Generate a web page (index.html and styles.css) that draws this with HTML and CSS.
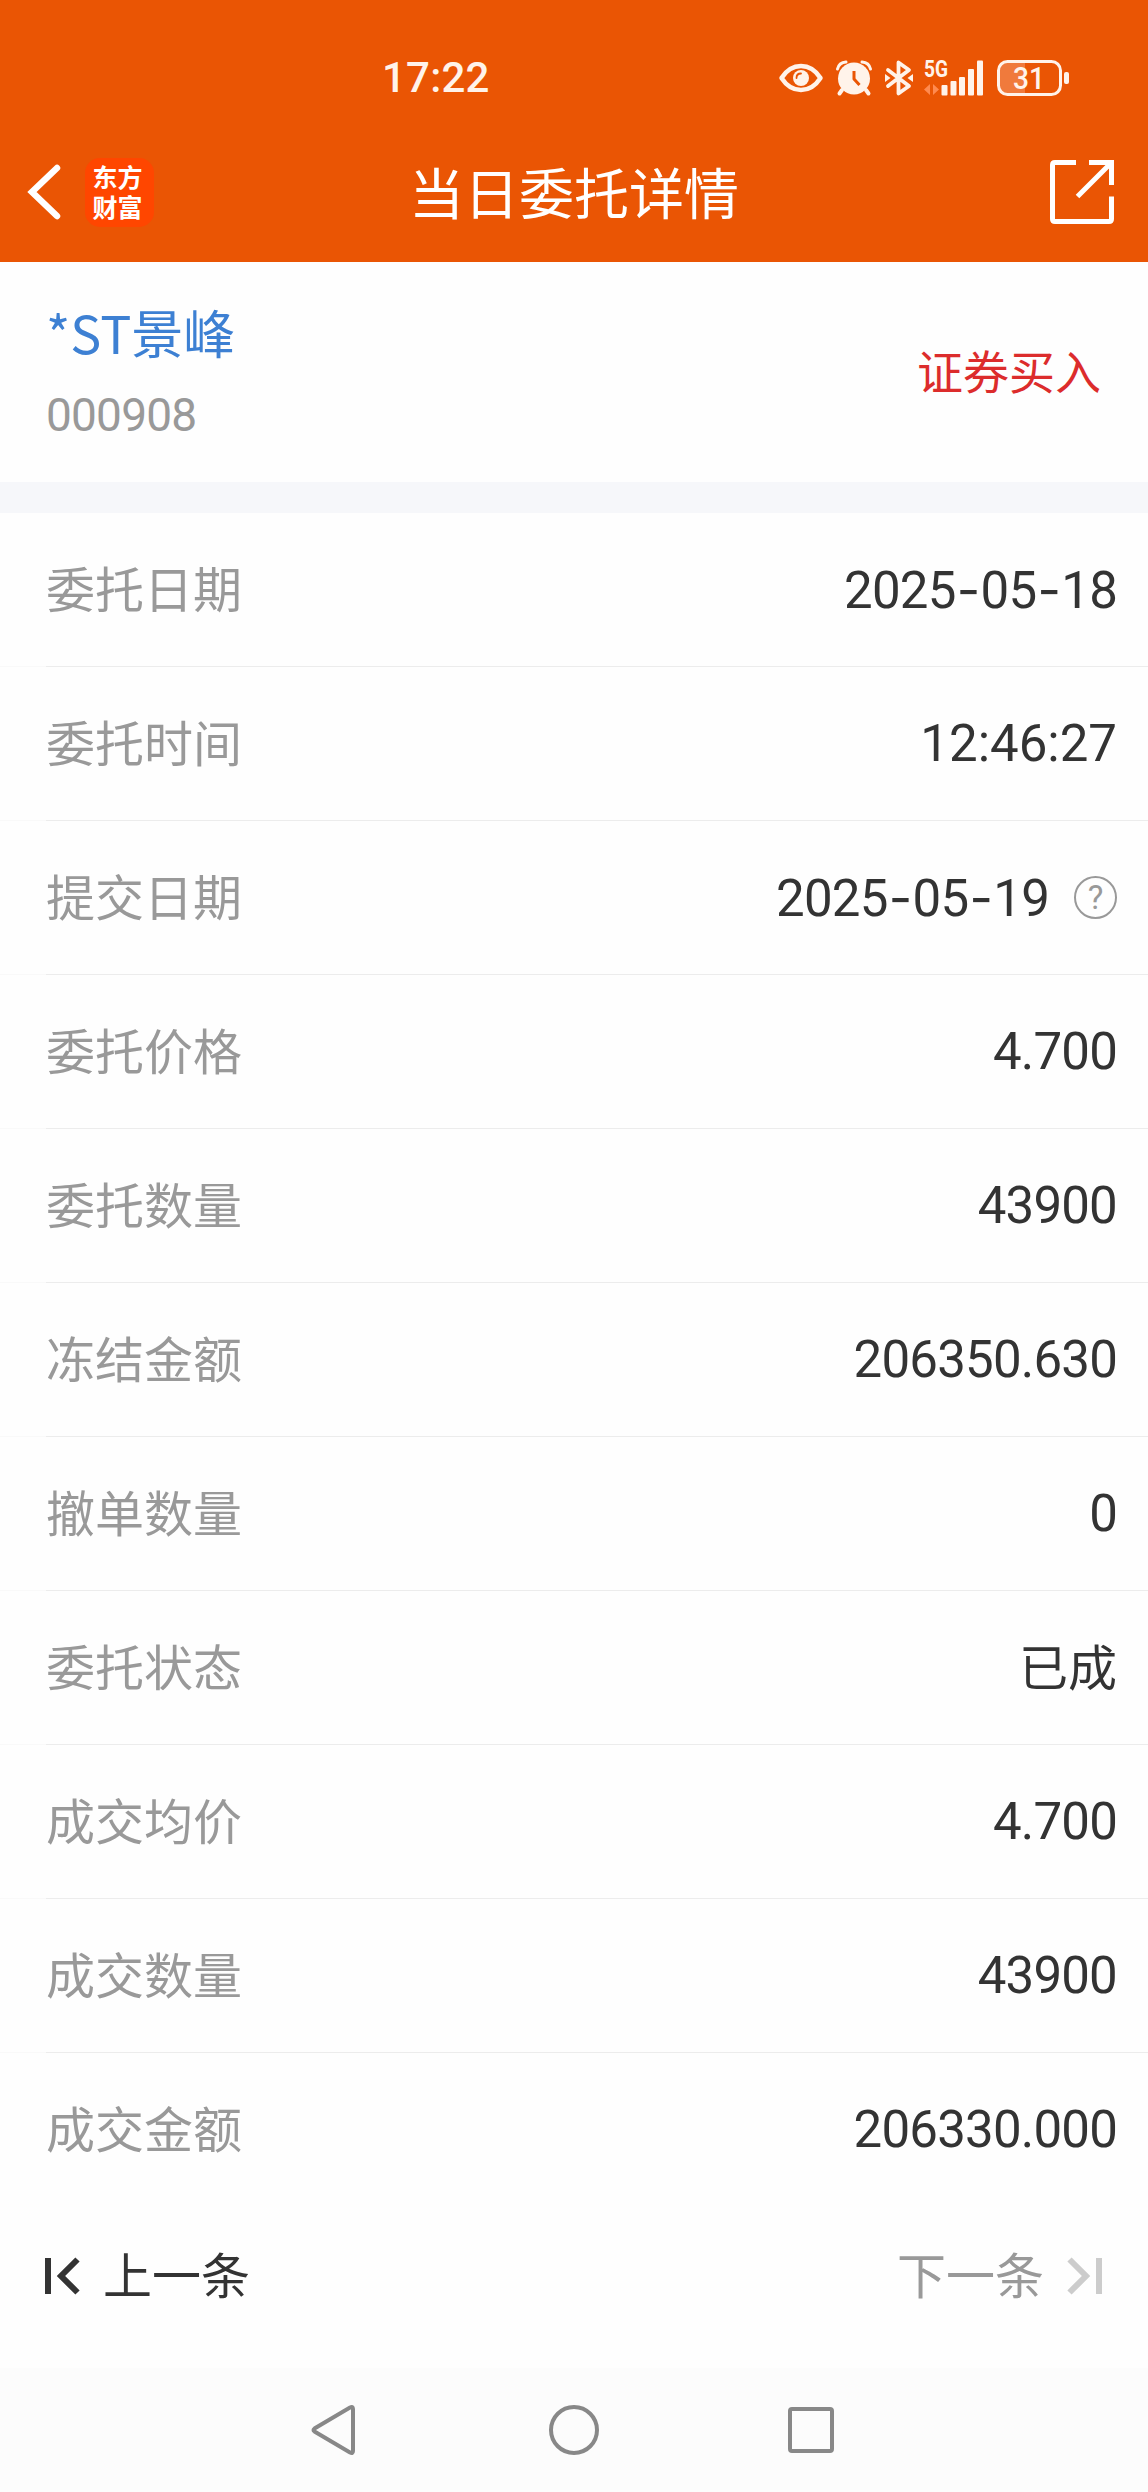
FILE: index.html
```
<!DOCTYPE html>
<html lang="zh-CN">
<head>
  <meta charset="UTF-8">
  <meta name="viewport" content="width=device-width, initial-scale=1.0">
  <title>当日委托详情</title>
  <link rel="stylesheet" href="styles.css">
</head>
<body>

  <header class="header">
    <!-- Status bar -->
    <div class="status-bar">
      <span class="time">17:22</span>
      <div class="status-icons">
        <svg class="icon-eye" width="44" height="30" viewBox="0 0 44 30">
          <path d="M2.500 15 C7 8 13 3 22 3 S37 8 41.500 15 C37 22 31 27 22 27 S7 22 2.500 15Z" fill="none" stroke="#fff3ea" stroke-width="4.500" stroke-linejoin="round"/>
          <circle cx="22" cy="15" r="8" fill="#fff3ea"/>
          <path d="M17.500 15 Q17.500 10.500 22 10.500" fill="none" stroke="#ea5504" stroke-width="1.800" stroke-linecap="round"/>
        </svg>
        <svg class="icon-alarm" width="36" height="36" viewBox="0 0 36 36">
          <circle cx="18" cy="18.500" r="16" fill="#fff3ea"/>
          <path d="M1.500 9 Q3 2.500 10 2 M34.500 9 Q33 2.500 26 2" fill="none" stroke="#fff3ea" stroke-width="3" stroke-linecap="round"/>
          <path d="M6 30 L3.500 33.500 M30 30 L32.500 33.500" stroke="#fff3ea" stroke-width="4" stroke-linecap="round"/>
          <path d="M18 11 V19 L23.500 25" fill="none" stroke="#ea5504" stroke-width="3" stroke-linejoin="round"/>
        </svg>
        <svg class="icon-bluetooth" width="28" height="36" viewBox="0 0 28 36">
          <path d="M3 10 L24 26 L13.500 33.500 V2.500 L24 10 L3 26" fill="none" stroke="#fff3ea" stroke-width="3.800" stroke-linejoin="round" stroke-linecap="round"/>
          <path d="M0 14 L5.500 18 L0 22Z M28 14 L22.500 18 L28 22Z" fill="#fff3ea"/>
        </svg>
        <svg class="icon-signal" width="60" height="36" viewBox="0 0 60 36">
          <text x="0" y="16.500" class="net" textLength="24" lengthAdjust="spacingAndGlyphs">5G</text>
          <path d="M6 24 V35 L0 29.500Z M9 24 V35 L15 29.500Z" fill="#ff8a50"/>
          <g fill="#fff3ea">
            <rect x="17.500" y="25" width="6" height="10.500" rx="1"/>
            <rect x="26.500" y="21" width="6" height="14.500" rx="1"/>
            <rect x="35" y="17" width="6" height="18.500" rx="1"/>
            <rect x="44" y="9" width="6" height="26.500" rx="1"/>
            <rect x="53" y="0.500" width="6" height="35" rx="1"/>
          </g>
        </svg>
        <svg class="icon-battery" width="72" height="36" viewBox="0 0 72 36">
          <path d="M11 2 H28 V34 H11 Q2 34 2 25 V11 Q2 2 11 2Z" fill="#f07a3c"/>
          <rect x="1.500" y="1.500" width="62" height="33" rx="9" fill="none" stroke="#fff3ea" stroke-width="3"/>
          <rect x="67" y="12" width="5" height="12" rx="2" fill="#fff3ea"/>
          <text x="32" y="29" class="level" text-anchor="middle" textLength="32" lengthAdjust="spacingAndGlyphs">31</text>
        </svg>
      </div>
    </div>

    <!-- Title bar -->
    <div class="title-bar">
      <div class="title-left">
        <svg width="34" height="56" viewBox="0 0 34 56">
          <path d="M30 4 L5 28 L30 52" fill="none" stroke="#fff" stroke-width="6.500" stroke-linecap="round"/>
        </svg>
        <div class="logo">东方<br>财富</div>
      </div>
      <h1>当日委托详情</h1>
      <div class="title-right">
        <svg width="64" height="64" viewBox="0 0 64 64">
          <path d="M26 2.500 H5 Q2.500 2.500 2.500 5 V59 Q2.500 61.500 5 61.500 H59 Q61.500 61.500 61.500 59 V36.500 M39 2.500 H61.500 V25 M61 3 L27.500 36.500" fill="none" stroke="#fff" stroke-width="5"/>
        </svg>
      </div>
    </div>
  </header>

  <section class="stock">
    <div>
      <div class="stock-name">*ST景峰</div>
      <div class="stock-code">000908</div>
    </div>
    <div class="direction">证券买入</div>
  </section>

  <!-- Order details -->
  <main class="details">
    <div class="row"><span class="label">委托日期</span><span class="value">2025<i>-</i>05<i>-</i>18</span></div>
    <div class="row"><span class="label">委托时间</span><span class="value value-time">12:46:27</span></div>
    <div class="row">
      <span class="label">提交日期</span>
      <span class="value">2025<i>-</i>05<i>-</i>19</span>
      <span class="help">?</span>
    </div>
    <div class="row"><span class="label">委托价格</span><span class="value">4.700</span></div>
    <div class="row"><span class="label">委托数量</span><span class="value">43900</span></div>
    <div class="row"><span class="label">冻结金额</span><span class="value">206350.630</span></div>
    <div class="row"><span class="label">撤单数量</span><span class="value">0</span></div>
    <div class="row"><span class="label">委托状态</span><span class="value value-text">已成</span></div>
    <div class="row"><span class="label">成交均价</span><span class="value">4.700</span></div>
    <div class="row"><span class="label">成交数量</span><span class="value">43900</span></div>
    <div class="row"><span class="label">成交金额</span><span class="value">206330.000</span></div>
  </main>

  <div class="pager">
    <div class="prev">
      <svg width="36" height="38" viewBox="0 0 36 38">
        <path d="M3 1 V37 M32.500 2.500 L16 19 L32.500 35.500" fill="none" stroke="#333" stroke-width="6"/>
      </svg>
      <span>上一条</span>
    </div>
    <div class="next">
      <span>下一条</span>
      <svg width="36" height="38" viewBox="0 0 36 38">
        <path d="M33 1 V37 M3.500 2.500 L20 19 L3.500 35.500" fill="none" stroke="#ccc" stroke-width="6"/>
      </svg>
    </div>
  </div>

  <!-- System navigation -->
  <nav class="nav-bar">
    <svg width="50" height="54" viewBox="0 0 50 54">
      <path d="M38 4.500 Q41 3 41 6 V48 Q41 51 38 49.500 L2.500 28.500 Q0.500 27 2.500 25.500Z" fill="none" stroke="#888" stroke-width="4"/>
    </svg>
    <svg width="50" height="54" viewBox="0 0 50 54">
      <circle cx="25" cy="27" r="23" fill="none" stroke="#888" stroke-width="4"/>
    </svg>
    <svg width="50" height="54" viewBox="0 0 50 54">
      <rect x="4" y="6" width="42" height="42" rx="2" fill="none" stroke="#888" stroke-width="4"/>
    </svg>
  </nav>

</body>
</html>
```
FILE: styles.css
```
body {
  margin: 0;
  background: #fefefe;
  color: #333;
  font-family: "Noto Sans CJK SC", sans-serif;
}

svg {
  display: block;
  overflow: visible;
}

.header {
  height: 262px;
  background: #ea5504;
  color: #fff;
}

/* Status bar */
.status-bar {
  display: flex;
  justify-content: space-between;
  align-items: center;
  height: 94px;
  padding: 31px 79px 0 382px;
}

.time {
  font-family: Roboto, sans-serif;
  font-size: 42px;
  font-weight: 500;
  line-height: 1;
  letter-spacing: 0.2px;
  color: #fff3ea;
}

.status-icons {
  display: flex;
  align-items: center;
}

.icon-alarm {
  margin-left: 13px;
}

.icon-bluetooth {
  margin-left: 13px;
}

.icon-signal {
  margin-left: 11px;
}

.icon-battery {
  margin-left: 13px;
}

.net {
  font: 700 23px Roboto, sans-serif;
  fill: #fff3ea;
}

.level {
  font: 500 32px Roboto, sans-serif;
  fill: #fff3ea;
}

/* Title bar */
.title-bar {
  display: grid;
  grid-template-columns: 1fr auto 1fr;
  align-items: center;
  height: 134px;
  padding: 0 34px 0 27px;
}

.title-left {
  display: flex;
  align-items: center;
  gap: 24px;
}

.logo {
  box-sizing: border-box;
  width: 69px;
  height: 69px;
  padding: 3px 4px 0 0;
  border-radius: 15px;
  background: #ff4600;
  font-size: 25px;
  font-weight: 700;
  line-height: 30px;
  text-align: center;
}

.title-bar h1 {
  margin: 0 -7px 4px 0;
  font-size: 55px;
  font-weight: 400;
  line-height: 1;
}

.title-right {
  justify-self: end;
}

/* Stock */
.stock {
  box-sizing: border-box;
  display: flex;
  justify-content: space-between;
  align-items: center;
  height: 251px;
  padding: 4px 47px 0 46px;
  border-bottom: 31px solid #f6f7fa;
}

.stock-name {
  font-size: 52px;
  line-height: 80px;
  color: #3d80d3;
}

.stock-code {
  padding-top: 3px;
  font-family: Roboto, sans-serif;
  font-size: 46px;
  line-height: 81px;
  letter-spacing: -0.8px;
  color: #999;
}

.direction {
  margin-bottom: 10px;
  font-size: 46px;
  color: #dc2c2c;
}

/* Detail rows */
.row {
  display: flex;
  align-items: center;
  height: 154px;
  padding: 0 31px 0 46px;
  background: linear-gradient(to right, #f9f9f9 46px, #ececec 46px) bottom / 100% 1px no-repeat;
}

.row:last-child {
  background: none;
}

.label {
  flex: 1;
  padding-bottom: 8px;
  font-size: 49px;
  color: #999;
}

.value {
  padding-bottom: 1px;
  font-family: Roboto, sans-serif;
  font-size: 51px;
  letter-spacing: -0.8px;
}

.value-time {
  letter-spacing: 0;
}

.value-text {
  padding-bottom: 8px;
  font-family: "Noto Sans CJK SC", sans-serif;
  font-size: 49px;
  letter-spacing: 0;
}

.value i {
  display: inline-block;
  width: 25px;
  font-family: Inter, sans-serif;
  font-style: normal;
  text-align: center;
}

.help {
  box-sizing: border-box;
  width: 43px;
  height: 43px;
  margin: 0 0 2px 25px;
  border: 2px solid #999;
  border-radius: 50%;
  font-family: Roboto, sans-serif;
  font-size: 33px;
  line-height: 39px;
  text-align: center;
  color: #999;
}

/* Prev / next */
.pager {
  display: flex;
  justify-content: space-between;
  align-items: center;
  height: 161px;
  padding: 0 46px 0 45px;
  font-size: 49px;
}

.prev,
.next {
  display: flex;
  align-items: center;
  height: 100px;
  margin-bottom: 24px;
}

.pager span {
  padding-bottom: 6px;
}

.prev {
  gap: 22px;
}

.next {
  gap: 22px;
  color: #999;
}

.nav-bar {
  display: flex;
  justify-content: center;
  align-items: center;
  gap: 187px;
  height: 124px;
  background: #fcfcfc;
}
```
